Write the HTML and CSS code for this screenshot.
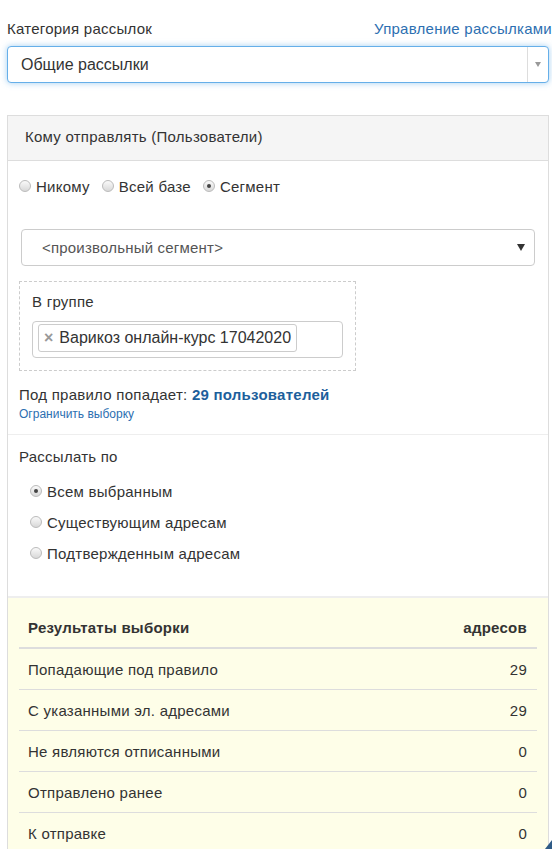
FILE: index.html
```html
<!DOCTYPE html>
<html>
<head>
    <meta charset="utf-8">
    <link rel="stylesheet" href="styles.css">
</head>
<body>
    <div class="top-row">
        <span class="label">Категория рассылок</span>
        <a class="link" href="#">Управление рассылками</a>
    </div>

    <div class="select focused">
        <span class="select-text">Общие рассылки</span>
        <span class="select-toggle"><span class="caret small"></span></span>
    </div>

    <div class="panel">
        <div class="panel-heading">Кому отправлять (Пользователи)</div>

        <div class="panel-body">
            <div class="radio-inline-row">
                <label class="radio"><span class="dot"></span>Никому</label>
                <label class="radio"><span class="dot"></span>Всей базе</label>
                <label class="radio"><span class="dot checked"></span>Сегмент</label>
            </div>

            <div class="select segment">
                <span class="select-text">&lt;произвольный сегмент&gt;</span>
                <span class="caret"></span>
            </div>

            <div class="rule-box">
                <div class="rule-title">В группе</div>
                <div class="tag-input">
                    <span class="tag"><span class="tag-remove">×</span>Варикоз онлайн-курс 17042020</span>
                </div>
            </div>

            <div class="rule-count">Под правило попадает: <b>29 пользователей</b></div>
            <a class="small-link" href="#">Ограничить выборку</a>
        </div>

        <div class="panel-body send-by">
            <div class="rule-title">Рассылать по</div>
            <div class="radio-list">
                <label class="radio"><span class="dot checked"></span>Всем выбранным</label>
                <label class="radio"><span class="dot"></span>Существующим адресам</label>
                <label class="radio"><span class="dot"></span>Подтвержденным адресам</label>
            </div>
        </div>

        <div class="results">
            <table>
                <thead>
                    <tr><th>Результаты выборки</th><th class="num">адресов</th></tr>
                </thead>
                <tbody>
                    <tr><td>Попадающие под правило</td><td class="num">29</td></tr>
                    <tr><td>С указанными эл. адресами</td><td class="num">29</td></tr>
                    <tr><td>Не являются отписанными</td><td class="num">0</td></tr>
                    <tr><td>Отправлено ранее</td><td class="num">0</td></tr>
                    <tr><td>К отправке</td><td class="num">0</td></tr>
                </tbody>
            </table>
        </div>
    </div>

    <!-- corner of a floating widget peeking in -->
    <div class="corner-widget"></div>
</body>
</html>
```

FILE: styles.css
```css
body {
    margin: 0;
    padding: 0 3px 0 7px;
    font-family: "Liberation Sans", Arial, sans-serif;
    font-size: 15px;
    letter-spacing: 0.25px;
    color: #333;
    background: #fff;
}

a {
    text-decoration: none;
}

.top-row {
    display: flex;
    justify-content: space-between;
    align-items: center;
    height: 20px;
    padding-top: 18px;
    margin-right: -3px;
}

.link {
    color: #2d6fb1;
}

.select {
    display: flex;
    align-items: center;
    height: 35px;
    border: 1px solid #ccc;
    border-radius: 4px;
    background: #fff;
}

.select.focused {
    margin-top: 8px;
    border-color: #66afe9;
    box-shadow: 0 0 6px rgba(102, 175, 233, 0.6);
}

.select-text {
    flex: 1;
    padding-left: 13px;
    font-size: 16px;
    letter-spacing: 0;
}

.select-toggle {
    display: flex;
    align-items: center;
    justify-content: center;
    width: 20px;
    height: 100%;
    border-left: 1px solid #ddd;
}

.caret {
    width: 0;
    height: 0;
    border-left: 4px solid transparent;
    border-right: 4px solid transparent;
    border-top: 7px solid #333;
    margin-right: 9px;
}

.caret.small {
    border-left-width: 3px;
    border-right-width: 3px;
    border-top: 5px solid #999;
    margin-right: 0;
}

.panel {
    margin-top: 32px;
    border: 1px solid #ddd;
    border-bottom: none;
}

.panel-heading {
    height: 44px;
    line-height: 42px;
    padding-left: 17px;
    background: #f5f5f5;
    border-bottom: 1px solid #ddd;
}

.panel-body {
    padding: 14px 13px 12px 11px;
}

.radio-inline-row {
    display: flex;
    gap: 12px;
    height: 22px;
    align-items: center;
}

.radio {
    display: flex;
    align-items: center;
}

.dot {
    width: 12px;
    height: 12px;
    margin-right: 5px;
    border-radius: 50%;
    border: 1px solid #bbb;
    background: linear-gradient(#fafafa, #d8d8d8);
    box-sizing: border-box;
    position: relative;
}

.dot.checked::after {
    content: "";
    position: absolute;
    left: 3px;
    top: 3px;
    width: 4px;
    height: 4px;
    border-radius: 50%;
    background: #444;
}

.select.segment {
    margin: 32px 0 0 2px;
    height: 35px;
    border-color: #ccc;
}

.select.segment .select-text {
    padding-left: 20px;
    font-size: 15px;
    letter-spacing: 0.2px;
    color: #555;
}

.rule-box {
    width: 311px;
    margin-top: 15px;
    padding: 10px 12px 12px 12px;
    border: 1px dashed #ccc;
}

.rule-title {
    height: 20px;
    line-height: 20px;
}

.tag-input {
    margin-top: 9px;
    padding: 2px 5px;
    border: 1px solid #ccc;
    border-radius: 4px;
    box-sizing: border-box;
    height: 37px;
}

.tag {
    display: inline-flex;
    align-items: center;
    height: 28px;
    padding: 0 5px 0 5px;
    border: 1px solid #ccc;
    border-radius: 3px;
    font-size: 16px;
    letter-spacing: 0;
    box-sizing: border-box;
}

.tag-remove {
    color: #999;
    font-weight: bold;
    margin-right: 6px;
}

.rule-count {
    margin-top: 14px;
    height: 20px;
    line-height: 20px;
}

.rule-count b {
    color: #1d5f9c;
}

.small-link {
    display: block;
    margin-top: 1px;
    font-size: 12px;
    line-height: 16px;
    letter-spacing: 0;
    color: #2d6fb1;
}

.send-by {
    border-top: 1px solid #eee;
    padding-top: 12px;
    padding-bottom: 32px;
}

.radio-list {
    margin-top: 13px;
    padding-left: 11px;
    display: flex;
    flex-direction: column;
    gap: 9px;
}

.radio-list .radio {
    height: 22px;
}

.results {
    background: #fefee8;
    border-top: 2px solid #eee;
    padding: 7px 11px 0 11px;
}

table {
    width: 100%;
    border-collapse: collapse;
}

th, td {
    text-align: left;
    padding: 10px 10px 10px 9px;
    height: 20px;
}

th {
    border-bottom: 2px solid #ddd;
    padding-top: 12px;
    padding-bottom: 10px;
}

td {
    border-top: 1px solid #ddd;
}

thead + tbody tr:first-child td {
    border-top: none;
}

.num {
    text-align: right;
}

.corner-widget {
    position: fixed;
    right: 0;
    bottom: 0;
    width: 0;
    height: 0;
    border-left: 7px solid transparent;
    border-bottom: 9px solid #2f5b86;
}
```
